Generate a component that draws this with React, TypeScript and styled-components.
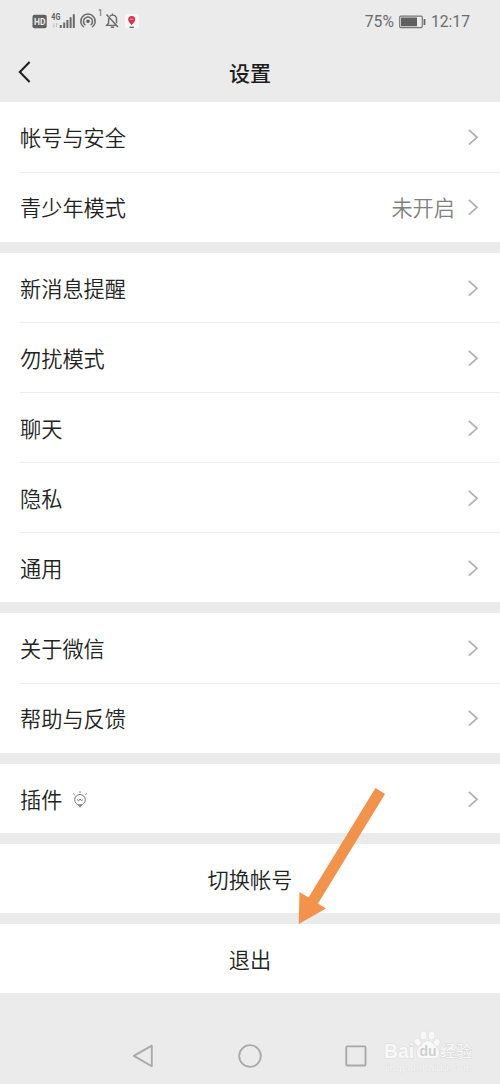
import React from 'react';
import styled, { createGlobalStyle } from 'styled-components';

const GlobalStyle = createGlobalStyle`
  * { box-sizing: border-box; }
  body {
    margin: 0;
    background: #ebebeb;
    font-family: Roboto, 'Noto Sans CJK SC', sans-serif;
    color: #222;
  }
`;

const Screen = styled.div`
  width: 500px;
  height: 1084px;
  display: flex;
  flex-direction: column;
  background: #ebebeb;
  position: relative;
  overflow: hidden;
`;

const StatusBar = styled.div`
  height: 42px;
  display: flex;
  justify-content: space-between;
  padding: 0 30px;
`;

const StatusRight = styled.div`
  display: flex;
  align-items: center;
  gap: 5px;
  height: 43px;
  font-size: 15.7px;
  color: #6b6b6b;
`;

const Header = styled.header`
  height: 60px;
  display: grid;
  grid-template-columns: 60px 1fr 60px;
  align-items: center;
`;

const BackButton = styled.button`
  display: flex;
  border: 0;
  padding: 0 0 0 17px;
  background: none;
`;

const Title = styled.h1`
  margin: 0;
  padding-top: 3px;
  text-align: center;
  font-size: 21px;
  line-height: 30px;
  font-weight: 500;
  color: #1c1c1c;
`;

const Groups = styled.main`
  display: flex;
  flex-direction: column;
  gap: 11px;
`;

const Group = styled.section<{ $height: number }>`
  height: ${(p) => p.$height}px;
  display: flex;
  flex-direction: column;
  background: #fff;
  padding-left: 20px;
`;

const Row = styled.div`
  flex: 1;
  display: flex;
  align-items: center;
  padding: 2px 21px 0 0;
  font-size: 21.2px;
  font-weight: 350;
  line-height: 30px;
  & + & {
    border-top: 1px solid #ededed;
  }
`;

const Label = styled.span`
  flex: 1;
  display: flex;
  align-items: center;
  gap: 10px;
  padding-top: 2px;
`;

const Value = styled.span`
  color: #808080;
  margin-right: 12px;
  padding-top: 2px;
`;

const ActionRow = styled(Row)`
  justify-content: center;
  padding: 4px 20px 0 0;
`;

const NavBar = styled.nav`
  flex: 1;
  display: flex;
  align-items: center;
  justify-content: space-between;
  padding: 34px 132px 0 131px;
`;

const ArrowOverlay = styled.svg`
  position: absolute;
  left: 290px;
  top: 780px;
`;

const Watermark = styled.svg`
  position: absolute;
  left: 378px;
  top: 1026px;
`;

const Chevron = () => (
  <svg width="12" height="18" viewBox="0 0 12 18" fill="none" stroke="#b2b2b2" strokeWidth="1.8">
    <path d="M1.8 .9 10 8.3 1.8 15.7" />
  </svg>
);

const BulbIcon = () => (
  <svg width="16" height="20" viewBox="0 0 16 20" fill="none" stroke="#777" strokeWidth="1">
    <circle cx="8" cy="8.8" r="5.3" />
    <path d="M5.1 8.6l1.6 1.2 1.4-1.8 1.2 1.6 1.5-.7M6 14.2h4M7 15.7h2M8 .3v1.5M1.2 2.6l1.4 1.2M14.8 2.6l-1.4 1.2" />
  </svg>
);

const StatusIcons = () => (
  <svg width="116" height="42" viewBox="30 0 116 42" fill="none" stroke="#686868">
    <rect x="32.5" y="14.8" width="14.2" height="13.4" rx="2" fill="#606060" stroke="none" />
    <text x="34" y="25" fontSize="9" fontWeight="700" fill="#ededed" stroke="none" textLength="11.4" lengthAdjust="spacingAndGlyphs">HD</text>
    <text x="51.3" y="20.2" fontSize="8.8" fontWeight="700" fill="#606060" stroke="none" textLength="9" lengthAdjust="spacingAndGlyphs">4G</text>
    <path d="M54 23v4.2m-1.3-1.5L54 27.3M56.5 27.3V23m1.3 1.5L56.5 23" stroke="#bdbdbd" strokeWidth=".8" />
    <path d="M60.8 25v3M64.2 22.5V28M67.4 20v8M70.6 17.2V28M73.8 14.3V28" strokeWidth="2" />
    <circle cx="88" cy="21.3" r="1.8" fill="#606060" stroke="none" />
    <path d="M85.4 25.1a4.5 4.5 0 1 1 5.2 0M83.9 27.2a7.2 7.2 0 1 1 8.2 0" strokeWidth="1.5" />
    <text x="97.7" y="16" fontSize="9" fill="#606060" stroke="none">1</text>
    <path d="M106.5 14.5 118 27M108.6 18.2v5.1l-1.9 2.1h9.5M109.8 16.3c1-.9 1.7-1.2 2.7-1.2 2.3 0 4 1.6 4 4v4.2M112.5 13.5V15M110.8 27.2h3.4" strokeWidth="1.4" />
    <rect x="125" y="14" width="14" height="14.5" rx="2.5" fill="#f8f6f6" stroke="none" />
    <path d="M131.7 25.2c-.7-1.7-3.5-3-3.5-5.8a3.5 3.5 0 0 1 7 0c0 2.8-2.8 4.1-3.5 5.8z" fill="#d73546" stroke="none" />
    <path d="M130 19.2h3.4" stroke="#f0a0a8" />
    <path d="M129.5 27.3h4.4" stroke="#555" strokeWidth="1.2" />
  </svg>
);

const BatteryIcon = () => (
  <svg width="27" height="14" viewBox="0 0 27 14" fill="none">
    <rect x=".7" y="1.2" width="22.6" height="11.4" rx="1" stroke="#777" strokeWidth="1.2" />
    <rect x="2" y="2.5" width="16" height="8.8" fill="#606060" />
    <path d="M25.5 4v6" stroke="#666" strokeWidth="1.8" />
  </svg>
);

type Item = { label: string; value?: string; bulb?: boolean };

const groups: { height: number; items: Item[] }[] = [
  { height: 140, items: [{ label: '帐号与安全' }, { label: '青少年模式', value: '未开启' }] },
  {
    height: 349,
    items: [{ label: '新消息提醒' }, { label: '勿扰模式' }, { label: '聊天' }, { label: '隐私' }, { label: '通用' }],
  },
  { height: 140, items: [{ label: '关于微信' }, { label: '帮助与反馈' }] },
  { height: 69, items: [{ label: '插件', bulb: true }] },
];

export default function App() {
  return (
    <Screen>
      <GlobalStyle />
      <StatusBar>
        <StatusIcons />
        <StatusRight>
          <span>75%</span>
          <BatteryIcon />
          <span>12:17</span>
        </StatusRight>
      </StatusBar>
      <Header>
        <BackButton aria-label="返回">
          <svg width="16" height="24" viewBox="0 0 16 24" fill="none" stroke="#1c1c1c" strokeWidth="2">
            <path d="M12.6 2 2.8 12l9.8 10" />
          </svg>
        </BackButton>
        <Title>设置</Title>
      </Header>
      <Groups>
        {groups.map((group) => (
          <Group key={group.items[0].label} $height={group.height}>
            {group.items.map((item) => (
              <Row key={item.label}>
                <Label>
                  {item.label}
                  {item.bulb && <BulbIcon />}
                </Label>
                {item.value && <Value>{item.value}</Value>}
                <Chevron />
              </Row>
            ))}
          </Group>
        ))}
        <Group $height={69}>
          <ActionRow>切换帐号</ActionRow>
        </Group>
        <Group $height={69}>
          <ActionRow>退出</ActionRow>
        </Group>
      </Groups>
      <NavBar>
        <svg width="24" height="26" viewBox="0 0 24 26" fill="none" stroke="#a9a9a9" strokeWidth="1.8" strokeLinejoin="round">
          <path d="M20.8 2.6v20.6L2.8 12.9z" />
        </svg>
        <svg width="26" height="26" viewBox="0 0 26 26" fill="none" stroke="#a9a9a9" strokeWidth="1.8">
          <circle cx="13" cy="13" r="10.8" />
        </svg>
        <svg width="24" height="26" viewBox="0 0 24 26" fill="none" stroke="#a9a9a9" strokeWidth="1.8">
          <rect x="2.3" y="3.3" width="19.2" height="19.2" rx="1" />
        </svg>
      </NavBar>
      <ArrowOverlay width="100" height="150" viewBox="290 780 100 150">
        <path d="M375.5 788 385 794 318 903.5 326 908.5 298.7 924 299.5 892 308.5 897.5z" fill="#f3924a" />
      </ArrowOverlay>
      <Watermark width="100" height="50" viewBox="378 1026 100 50">
        <g fill="#f8f8f8" stroke="#dadada" strokeWidth="1" paintOrder="stroke">
          <text x="384" y="1057.5" fontSize="20.5" fontWeight="700" textLength="30" lengthAdjust="spacingAndGlyphs" fontFamily="Liberation Sans">Bai</text>
          <ellipse cx="417.6" cy="1042" rx="3" ry="3.8" transform="rotate(-20 417.6 1042)" />
          <ellipse cx="423.6" cy="1035.5" rx="3" ry="4" />
          <ellipse cx="431.6" cy="1035.5" rx="3" ry="4" />
          <ellipse cx="436.8" cy="1042.5" rx="2.9" ry="3.8" transform="rotate(20 436.8 1042.5)" />
          <path d="M427.5 1041c4 0 5.500 3 9 6 4.500 4 3 12-3.500 11.500-3-.3-7-.3-10 0-6.500.5-8-7.500-3.500-11.500 3.500-3 4-6 8-6z" />
          <text x="440" y="1056.500" fontSize="16" fontWeight="400" fontFamily="Noto Sans CJK SC">经验</text>
        </g>
        <text x="419.5" y="1056" fontSize="14" fontWeight="700" fill="#cfcfcf" fontFamily="Liberation Sans">du</text>
        <text x="385" y="1070.5" fontSize="8.5" fill="#f4f4f4" stroke="#e0e0e0" strokeWidth=".7" paintOrder="stroke" textLength="87" lengthAdjust="spacingAndGlyphs" fontFamily="Liberation Sans">jingyan.baidu.com</text>
      </Watermark>
    </Screen>
  );
}
